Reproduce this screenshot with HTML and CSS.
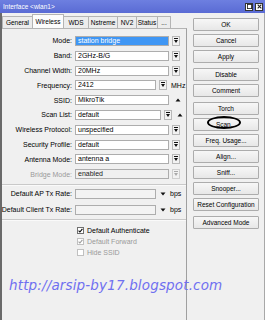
FILE: index.html
```html
<!DOCTYPE html>
<html lang="en">
<head>
  <meta charset="UTF-8" />
  <title>Interface &lt;wlan1&gt;</title>
  <link rel="stylesheet" href="styles.css">
</head>
<body>
  <div class="window">
    <!-- Title bar -->
    <div class="titlebar">
      <span class="title">Interface &lt;wlan1&gt;</span>
      <div class="win-btns">
        <span class="wbtn"><svg width="6" height="6" viewBox="0 0 6 6"><rect x="0.5" y="0.5" width="5" height="5" fill="none" stroke="#222" stroke-width="1"/></svg></span>
        <span class="wbtn"><svg width="6" height="6" viewBox="0 0 6 6"><path d="M0.8 0.8 L5.2 5.2 M5.2 0.8 L0.8 5.2" stroke="#222" stroke-width="1.3"/></svg></span>
      </div>
    </div>

    <div class="body">
      <!-- Tabs + settings -->
      <div class="tabpane">
        <div class="tabs">
          <span class="tab w-general">General</span>
          <span class="tab active w-wireless">Wireless</span>
          <span class="tab w-wds">WDS</span>
          <span class="tab w-nstreme">Nstreme</span>
          <span class="tab w-nv2">NV2</span>
          <span class="tab w-status">Status</span>
          <span class="tab w-more">...</span>
        </div>

        <div class="panel">
          <div class="row">
            <label>Mode:</label>
            <span class="field selected">station bridge</span>
            <span class="dd"><svg width="6" height="8" viewBox="0 0 6 8"><path d="M1 1.5 H5" stroke="#111"/><path d="M1 3 H5 L3 6 Z" fill="#111"/></svg></span>
          </div>
          <div class="row">
            <label>Band:</label>
            <span class="field">2GHz-B/G</span>
            <span class="dd"><svg width="6" height="8" viewBox="0 0 6 8"><path d="M1 1.5 H5" stroke="#111"/><path d="M1 3 H5 L3 6 Z" fill="#111"/></svg></span>
          </div>
          <div class="row">
            <label>Channel Width:</label>
            <span class="field">20MHz</span>
            <span class="dd"><svg width="6" height="8" viewBox="0 0 6 8"><path d="M1 1.5 H5" stroke="#111"/><path d="M1 3 H5 L3 6 Z" fill="#111"/></svg></span>
          </div>
          <div class="row">
            <label>Frequency:</label>
            <span class="field short">2412</span>
            <span class="dd"><svg width="6" height="8" viewBox="0 0 6 8"><path d="M1 1.5 H5" stroke="#111"/><path d="M1 3 H5 L3 6 Z" fill="#111"/></svg></span>
            <span class="unit">MHz</span>
          </div>
          <div class="row">
            <label>SSID:</label>
            <span class="field">MikroTik</span>
            <span class="up"><svg width="6" height="4" viewBox="0 0 6 4"><path d="M0.5 3.5 H5.5 L3 0.5 Z" fill="#111"/></svg></span>
          </div>
          <div class="row">
            <label>Scan List:</label>
            <span class="field mid">default</span>
            <span class="dd"><svg width="6" height="8" viewBox="0 0 6 8"><path d="M1 1.5 H5" stroke="#111"/><path d="M1 3 H5 L3 6 Z" fill="#111"/></svg></span>
            <span class="up near"><svg width="6" height="4" viewBox="0 0 6 4"><path d="M0.5 3.5 H5.5 L3 0.5 Z" fill="#111"/></svg></span>
          </div>
          <div class="row">
            <label>Wireless Protocol:</label>
            <span class="field">unspecified</span>
            <span class="dd"><svg width="6" height="8" viewBox="0 0 6 8"><path d="M1 1.5 H5" stroke="#111"/><path d="M1 3 H5 L3 6 Z" fill="#111"/></svg></span>
          </div>
          <div class="row">
            <label>Security Profile:</label>
            <span class="field">default</span>
            <span class="dd"><svg width="6" height="8" viewBox="0 0 6 8"><path d="M1 1.5 H5" stroke="#111"/><path d="M1 3 H5 L3 6 Z" fill="#111"/></svg></span>
          </div>
          <div class="row">
            <label>Antenna Mode:</label>
            <span class="field">antenna a</span>
            <span class="dd"><svg width="6" height="8" viewBox="0 0 6 8"><path d="M1 1.5 H5" stroke="#111"/><path d="M1 3 H5 L3 6 Z" fill="#111"/></svg></span>
          </div>
          <div class="row">
            <label class="muted">Bridge Mode:</label>
            <span class="field disabled">enabled</span>
            <span class="dd disabled"><svg width="6" height="8" viewBox="0 0 6 8"><path d="M1 1.5 H5" stroke="#aaa"/><path d="M1 3 H5 L3 6 Z" fill="#aaa"/></svg></span>
          </div>

          <div class="sep sep-a"></div>

          <div class="row rate">
            <label>Default AP Tx Rate:</label>
            <span class="field short blank"></span>
            <span class="down"><svg width="6" height="4" viewBox="0 0 6 4"><path d="M0.5 0.5 H5.5 L3 3.5 Z" fill="#111"/></svg></span>
            <span class="unit">bps</span>
          </div>
          <div class="row rate">
            <label>Default Client Tx Rate:</label>
            <span class="field short blank"></span>
            <span class="down"><svg width="6" height="4" viewBox="0 0 6 4"><path d="M0.5 0.5 H5.5 L3 3.5 Z" fill="#111"/></svg></span>
            <span class="unit">bps</span>
          </div>

          <div class="sep sep-b"></div>

          <div class="check">
            <span class="box"><svg width="5" height="5" viewBox="0 0 5 5"><path d="M0.6 2.6 L1.9 4 L4.4 0.9" stroke="#000" stroke-width="1.1" fill="none"/></svg></span>
            <span>Default Authenticate</span>
          </div>
          <div class="check muted">
            <span class="box"><svg width="5" height="5" viewBox="0 0 5 5"><path d="M0.6 2.6 L1.9 4 L4.4 0.9" stroke="#9a9a9a" stroke-width="1.1" fill="none"/></svg></span>
            <span>Default Forward</span>
          </div>
          <div class="check muted">
            <span class="box"></span>
            <span>Hide SSID</span>
          </div>
        </div>
      </div>

      <!-- Action buttons -->
      <div class="actions">
        <span class="btn">OK</span>
        <span class="btn">Cancel</span>
        <span class="btn">Apply</span>
        <span class="btn gap">Disable</span>
        <span class="btn">Comment</span>
        <span class="btn gap">Torch</span>
        <span class="btn">Scan...</span>
        <span class="btn">Freq. Usage...</span>
        <span class="btn">Align...</span>
        <span class="btn">Sniff...</span>
        <span class="btn">Snooper...</span>
        <span class="btn">Reset Configuration</span>
        <span class="btn gap">Advanced Mode</span>
      </div>
    </div>

    <!-- hand-drawn circle around Scan -->
    <div class="mark"></div>

    <!-- blog watermark -->
    <div class="watermark">http://arsip-by17.blogspot.com</div>
  </div>
</body>
</html>
```

FILE: styles.css
```css
/* Base */
body {
  margin: 0;
  font-family: "Liberation Sans", Arial, sans-serif;
  font-size: 7px;
  color: #000;
  background: #fff;
}
.window {
  position: relative;
  width: 265px;
  height: 320px;
  overflow: hidden;
  background: #f0f0f0;
}
/* Title bar */
.titlebar {
  height: 13px;
  background: linear-gradient(#6d7fe0, #5a6bd4);
  color: #fff;
  display: flex;
  align-items: center;
  justify-content: space-between;
  padding: 0 2px 0 3px;
  font-size: 6.5px;
}
.win-btns {
  display: flex;
  gap: 2px;
}
.wbtn {
  width: 8px;
  height: 8px;
  box-sizing: border-box;
  background: #fff;
  border: 1px solid #333;
  display: flex;
  align-items: center;
  justify-content: center;
}
.wbtn svg {
  width: 5px;
  height: 5px;
}
/* Body */
.body {
  display: flex;
  height: 307px;
  border-left: 2px solid #6a6a6a;
  border-right: 1px solid #a8a8a8;
}
.tabpane {
  width: 185px;
  display: flex;
  flex-direction: column;
}
.tabs {
  height: 15px;
  display: flex;
  align-items: flex-end;
}
.tab {
  height: 12px;
  box-sizing: border-box;
  border: 1px solid #b4b4b4;
  border-bottom: none;
  margin-right: -1px;
  background: #ececec;
  font-size: 6.5px;
  display: flex;
  align-items: center;
  justify-content: center;
}
.tab.active {
  height: 14px;
  background: #fcfcfc;
  position: relative;
  z-index: 1;
}
.w-general { width: 31px; }
.w-wireless { width: 32px; }
.w-wds { width: 26px; }
.w-nstreme { width: 30px; }
.w-nv2 { width: 20px; }
.w-status { width: 22px; }
.w-more { width: 14px; }

/* Settings panel */
.panel {
  flex: 1;
  border-top: 1px solid #b4b4b4;
  border-right: 1px solid #a0a0a0;
  display: flex;
  flex-direction: column;
  padding-top: 5.6px;
}
.row {
  height: 12.8px;
  margin-bottom: 2px;
  display: flex;
  align-items: center;
}
.row label {
  width: 70px;
  flex: none;
  margin-right: 3px;
  display: flex;
  justify-content: flex-end;
  white-space: nowrap;
}
.muted {
  color: #9a9a9a;
}
.field {
  width: 94px;
  height: 10px;
  box-sizing: border-box;
  border: 1px solid #adadad;
  background: #fff;
  padding: 0 2px;
  line-height: 8px;
  white-space: nowrap;
  overflow: hidden;
}
.field.short { width: 81px; }
.field.mid { width: 86px; }
.field.selected {
  background: #3f96f4;
  color: #fff;
}
.field.disabled {
  background: #f0f0f0;
  color: #222;
}
.field.blank {
  background: #f3f3f3;
}
.dd {
  width: 8px;
  height: 10px;
  box-sizing: border-box;
  margin-left: 3px;
  border: 1px solid #b8b8b8;
  background: #f2f2f2;
  display: flex;
  align-items: center;
  justify-content: center;
}
.dd.disabled {
  border-color: #cfcfcf;
}
.unit {
  margin-left: 4px;
}
.up {
  margin-left: 6px;
  display: flex;
}
.up.near { margin-left: 5px; }
.down {
  margin-left: 4px;
  display: flex;
}
.row.rate {
  margin-bottom: 3px;
}
/* Separators */
.sep {
  height: 1px;
  background: #c9c9c9;
  border-bottom: 1px solid #fafafa;
}
.sep-a {
  margin: 1px 0 2px;
}
.sep-b {
  margin: 0 0 4px;
}
/* Checkboxes */
.check {
  height: 10px;
  margin-bottom: 1px;
  padding-left: 75px;
  display: flex;
  align-items: center;
  gap: 3px;
}
.box {
  width: 7px;
  height: 7px;
  box-sizing: border-box;
  border: 1px solid #707070;
  background: #fff;
  display: flex;
  align-items: center;
  justify-content: center;
}
.check.muted .box {
  border-color: #c0c0c0;
}
/* Right button column */
.actions {
  display: flex;
  flex-direction: column;
  padding: 5px 0 0 6px;
}
.btn {
  width: 66px;
  height: 13px;
  box-sizing: border-box;
  margin-bottom: 3px;
  border: 1px solid #acacac;
  border-radius: 1px;
  background: linear-gradient(#f7f7f7, #e7e7e7);
  font-size: 6.5px;
  display: flex;
  align-items: center;
  justify-content: center;
}
.btn.gap {
  margin-top: 2px;
}
/* Overlays */
.mark {
  position: absolute;
  left: 207px;
  top: 116px;
  width: 34px;
  height: 13px;
  box-sizing: border-box;
  border: 2px solid #000;
  border-radius: 50%;
}
.watermark {
  position: absolute;
  left: 9px;
  top: 277px;
  font-family: "DejaVu Sans", Verdana, sans-serif;
  font-style: italic;
  font-size: 13.5px;
  letter-spacing: 0.15px;
  color: #6f6ff0;
  white-space: nowrap;
}
```
